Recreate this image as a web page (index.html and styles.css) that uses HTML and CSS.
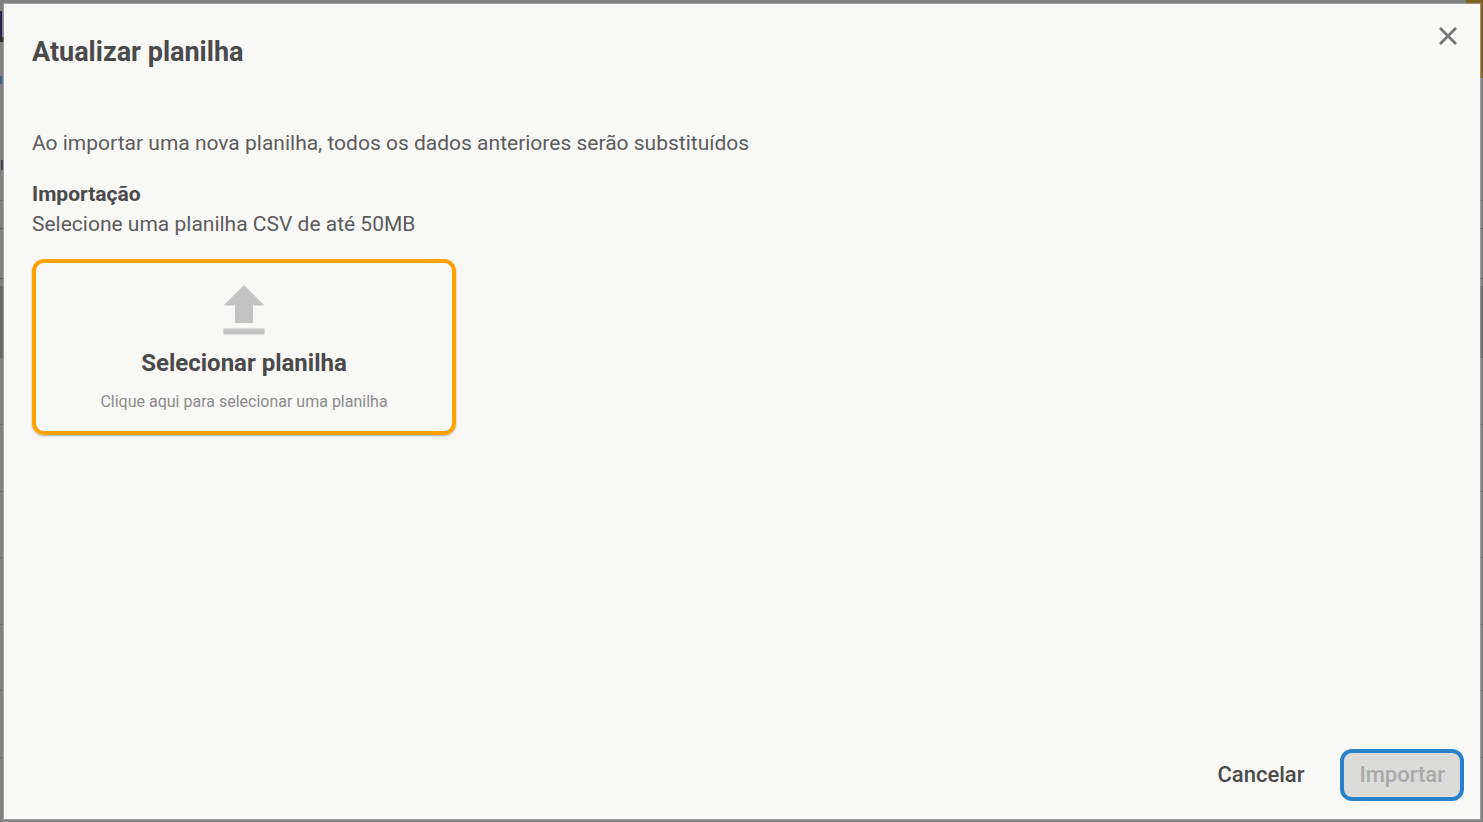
FILE: index.html
```html
<!DOCTYPE html>
<html lang="pt-BR">
<head>
<meta charset="utf-8">
<meta name="viewport" content="width=device-width, initial-scale=1">
<title>Atualizar planilha</title>
<link rel="stylesheet" href="styles.css">
</head>
<body>
<div class="backdrop">
  <main class="dialog" role="dialog" aria-labelledby="dialog-title">
    <header class="dialog-header">
      <h1 class="dialog-title" id="dialog-title">Atualizar planilha</h1>
      <button class="close-button" type="button" aria-label="Fechar">
        <svg width="18" height="18" viewBox="0 0 18 18" aria-hidden="true"><path d="M1 1L17 17M17 1L1 17" fill="none" stroke="#737373" stroke-width="2.6"/></svg>
      </button>
    </header>
    <section class="dialog-body">
      <p class="notice">Ao importar uma nova planilha, todos os dados anteriores serão substituídos</p>
      <h2 class="section-title">Importação</h2>
      <p class="hint">Selecione uma planilha CSV de até 50MB</p>
      <button class="upload-card" type="button">
        <svg class="upload-icon" width="42" height="50" viewBox="0 0 42 50" aria-hidden="true"><path d="M21 0L41.5 20.5H30V38H12V20.5H.5ZM.5 43.5H41.5V49.5H.5Z" fill="#c3c3c3"/></svg>
        <span class="upload-title">Selecionar planilha</span>
        <span class="upload-hint">Clique aqui para selecionar uma planilha</span>
      </button>
    </section>
    <footer class="dialog-footer">
      <button class="button" type="button">Cancelar</button>
      <button class="button button-import" type="button" disabled>Importar</button>
    </footer>
  </main>
</div>
</body>
</html>
```

FILE: styles.css
```css
* {
  box-sizing: border-box;
}

body {
  margin: 0;
  font-family: Roboto, "Liberation Sans", sans-serif;
  color: #4a4a4a;
}

button {
  font-family: inherit;
  color: inherit;
  border: 0;
  background: transparent;
  cursor: pointer;
}

h1,
h2,
p {
  margin: 0;
}

/* Dimmed page that shows around the edges of the dialog */
.backdrop {
  display: flex;
  min-height: 100vh;
  padding: 4px 3px 3px 4px;
  background:
    linear-gradient(#80601f, #80601f) right top / 17px 78px no-repeat,
    linear-gradient(#28264a, #28264a) 0 11px / 2px 26px no-repeat,
    linear-gradient(#2c2c2c, #2c2c2c) 0 37px / 4px 5px no-repeat,
    linear-gradient(#386184, #386184) 0 76px / 2px 8px no-repeat,
    linear-gradient(#3b4248, #3b4248) 1px 160px / 2px 10px no-repeat,
    linear-gradient(#6c6c6c, #6c6c6c) 0 200px / 100% 1px no-repeat,
    linear-gradient(#5f5f5f, #5f5f5f) 0 228px / 100% 1px no-repeat,
    linear-gradient(#606060, #606060) 0 278px / 100% 1px no-repeat,
    linear-gradient(#686868, #686868) 0 286px / 100% 72px no-repeat,
    linear-gradient(#6c6c6c, #6c6c6c) 0 424px / 100% 1px no-repeat,
    linear-gradient(#6c6c6c, #6c6c6c) 0 491px / 100% 1px no-repeat,
    linear-gradient(#6c6c6c, #6c6c6c) 0 557px / 100% 1px no-repeat,
    linear-gradient(#6c6c6c, #6c6c6c) 0 624px / 100% 1px no-repeat,
    linear-gradient(#6c6c6c, #6c6c6c) 0 690px / 100% 1px no-repeat,
    linear-gradient(#6c6c6c, #6c6c6c) 0 757px / 100% 1px no-repeat,
    #7f7f7f;
}

.dialog {
  display: flex;
  flex: 1;
  flex-direction: column;
  padding: 16px 16px 18px 28px;
  background: #f8f8f6;
  box-shadow: 0 0 1px 1px rgba(190, 190, 190, 0.5);
}

.dialog-header {
  display: flex;
  align-items: flex-start;
  justify-content: space-between;
}

.dialog-title {
  padding-top: 16px;
  font-size: 27px;
  line-height: 32px;
  font-weight: 700;
}

.close-button {
  display: flex;
  padding: 7px;
}

.dialog-body {
  flex: 1;
  padding-top: 61px;
  font-size: 21px;
  line-height: 28px;
}

.notice,
.hint {
  color: #5c5c5c;
}

.section-title {
  margin-top: 22px;
  font-size: 21px;
  line-height: 30px;
  font-weight: 700;
}

.hint {
  margin-top: 1px;
}

.upload-card {
  display: flex;
  flex-direction: column;
  align-items: center;
  width: 424px;
  max-width: 100%;
  margin-top: 21px;
  padding: 22px 16px 18px;
  border: 4px solid #ffa200;
  border-radius: 12px;
  box-shadow: 0 1px 2px rgba(0, 0, 0, 0.3);
}

.upload-title {
  margin-top: 12px;
  font-size: 24px;
  line-height: 32px;
  font-weight: 700;
}

.upload-hint {
  margin-top: 12px;
  font-size: 16px;
  line-height: 22px;
  color: #8c8c8c;
}

.dialog-footer {
  display: flex;
  justify-content: flex-end;
  gap: 16px;
}

.button {
  min-height: 52px;
  padding: 0 20px;
  font-size: 22px;
  line-height: 28px;
  font-weight: 500;
}

.button-import {
  padding: 0 15px;
  border: 4px solid #2b80ca;
  border-radius: 12px;
  background: #dbdbd9;
  color: #a9a9a9;
  cursor: default;
}
```
